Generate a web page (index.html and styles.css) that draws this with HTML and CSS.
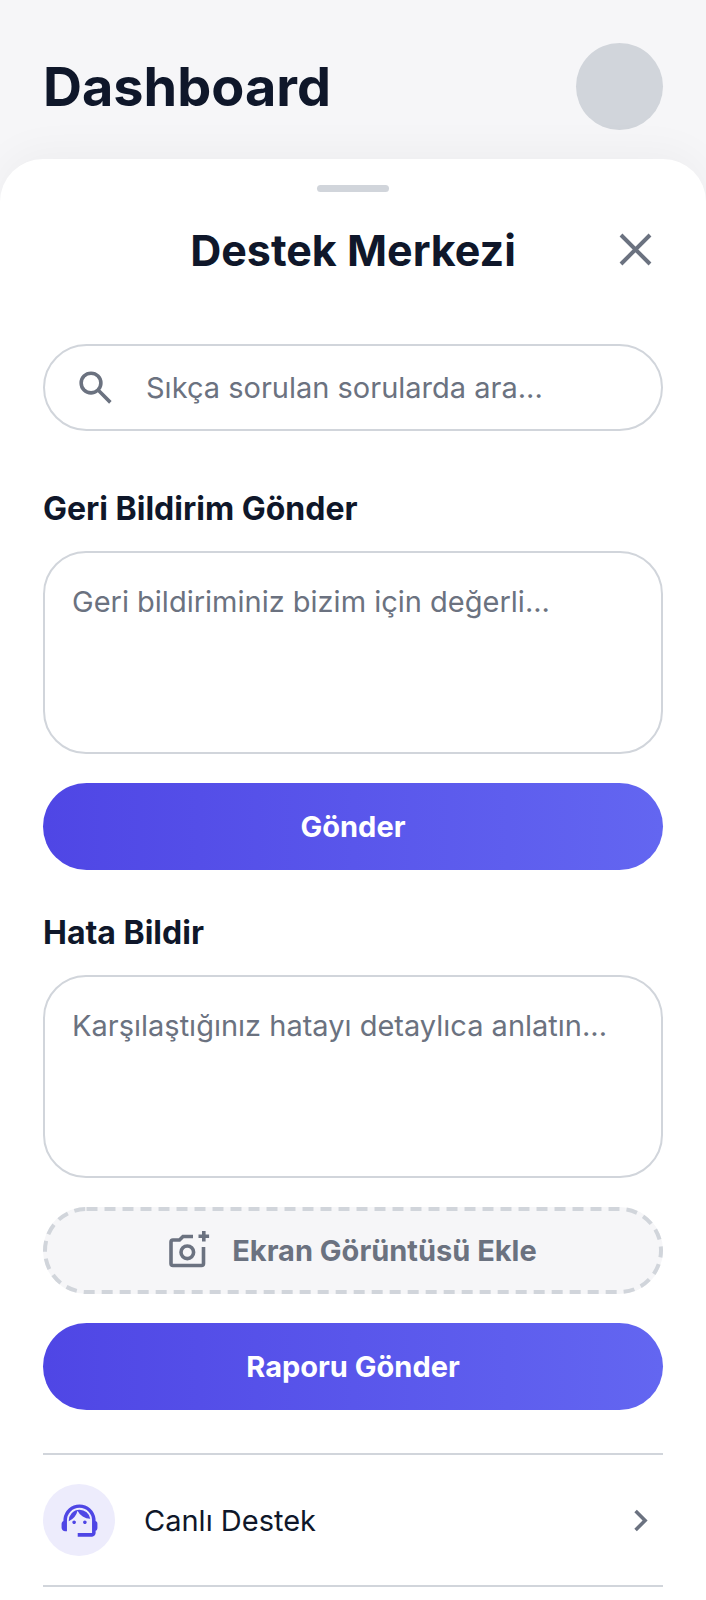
FILE: index.html
```html
<!DOCTYPE html>
<html lang="tr">
<head>
<meta charset="utf-8">
<meta name="viewport" content="width=device-width, initial-scale=1">
<title>Destek Merkezi</title>
<link rel="stylesheet" href="styles.css">
</head>
<body>
<header class="topbar">
  <h1 class="topbar-title">Dashboard</h1>
  <div class="avatar"></div>
</header>
<main class="sheet">
  <div class="handle"></div>
  <div class="sheet-header">
    <h2 class="sheet-title">Destek Merkezi</h2>
    <button class="close" type="button" aria-label="Kapat">
      <svg class="close-icon" viewBox="0 0 54 54" aria-hidden="true"><path d="M12 12l29 29M41 12l-29 29" fill="none" stroke="currentColor" stroke-width="4"/></svg>
    </button>
  </div>
  <div class="content">
    <label class="search">
      <svg class="icon" viewBox="0 -960 960 960" aria-hidden="true"><path d="M784-120 532-372q-30 24-69 38t-83 14q-109 0-184.500-75.500T120-580q0-109 75.500-184.500T380-840q109 0 184.500 75.500T640-580q0 44-14 83t-38 69l252 252-56 56ZM380-400q75 0 127.500-52.500T560-580q0-75-52.500-127.500T380-760q-75 0-127.500 52.500T200-580q0 75 52.500 127.500T380-400Z"/></svg>
      <input class="search-input" type="search" aria-label="Sorularda ara" placeholder="Sıkça sorulan sorularda ara...">
    </label>
    <form class="group">
      <label class="group-title" for="feedback">Geri Bildirim Gönder</label>
      <textarea class="field" id="feedback" placeholder="Geri bildiriminiz bizim için değerli..."></textarea>
      <button class="button primary" type="button">Gönder</button>
    </form>
    <form class="group">
      <label class="group-title" for="report">Hata Bildir</label>
      <textarea class="field" id="report" placeholder="Karşılaştığınız hatayı detaylıca anlatın..."></textarea>
      <button class="button upload" type="button">
        <svg class="dashes" aria-hidden="true"><rect class="dashes-line" x="2" y="2" rx="41.500"/></svg>
        <svg class="camera" viewBox="0 0 41 43" aria-hidden="true"><g fill="none" stroke="currentColor" stroke-width="3.600"><path d="M24 7.500H14l-3.500 3.500H4q-2 0-2 2v21.500q0 2 2 2h28.500q2 0 2-2V18"/><circle cx="18.300" cy="23.300" r="6.300"/><path d="M34.800 2v10.600M29.500 7.300h10.600"/></g></svg>
        <span>Ekran Görüntüsü Ekle</span>
      </button>
      <button class="button primary" type="button">Raporu Gönder</button>
    </form>
    <nav class="links">
      <a class="link" href="#support">
        <span class="badge"><svg class="icon" viewBox="0 -960 960 960" aria-hidden="true"><path d="M440-120v-80h320v-284q0-117-81.500-198.500T480-764q-117 0-198.500 81.500T200-484v244h-40q-33 0-56.500-23.500T80-320v-80q0-21 10.500-39.500T120-469l3-53q8-68 39.500-126t79-101q47.500-43 109-67T480-840q68 0 129 24t109 66.500Q766-707 797-649t40 126l3 52q19 9 29.500 27t10.500 38v92q0 20-10.500 38T840-249v49q0 33-23.500 56.500T760-120H440Zm-80-280q-17 0-28.500-11.500T320-440q0-17 11.500-28.500T360-480q17 0 28.500 11.500T400-440q0 17-11.500 28.500T360-400Zm240 0q-17 0-28.500-11.500T560-440q0-17 11.500-28.500T600-480q17 0 28.500 11.500T640-440q0 17-11.500 28.500T600-400Zm-359-62q-7-106 64-182t177-76q89 0 156.500 56.500T720-519q-91-1-167.500-49T435-698q-16 80-67.500 142.500T241-462Z"/></svg></span>
        <span class="link-text">Canlı Destek</span>
        <svg class="icon" viewBox="0 -960 960 960" aria-hidden="true"><path d="M504-480 320-664l56-56 240 240-240 240-56-56 184-184Z"/></svg>
      </a>
    </nav>
  </div>
</main>
</body>
</html>
```
FILE: styles.css
```css
* {
  box-sizing: border-box;
}

body {
  margin: 0;
  min-height: 100vh;
  display: flex;
  flex-direction: column;
  background: #f6f6f8;
  color: #0f172a;
  font-family: Inter, "Liberation Sans", sans-serif;
  font-size: 29px;
  line-height: 43px;
}

h1,
h2 {
  margin: 0;
}

button,
input,
textarea {
  font: inherit;
}

svg {
  display: block;
  flex: none;
}

.topbar {
  display: flex;
  align-items: center;
  justify-content: space-between;
  padding: 43px 43px 29px;
}

.topbar-title {
  font-size: 54px;
  line-height: 65px;
  font-weight: 700;
}

.avatar {
  width: 87px;
  height: 87px;
  border-radius: 50%;
  background: #d1d5db;
}

.sheet {
  flex: 1;
  padding-top: 26px;
  border-radius: 43px 43px 0 0;
  background: #fff;
  box-shadow: 0 -7px 43px rgba(0, 0, 0, 0.04);
}

.handle {
  width: 72px;
  height: 7px;
  margin: 0 auto;
  border-radius: 4px;
  background: #d1d5db;
}

.sheet-header {
  display: grid;
  grid-template-columns: 54px 1fr 54px;
  align-items: center;
  padding: 31px 43px 0;
}

.sheet-title {
  grid-column: 2;
  font-size: 43px;
  line-height: 54px;
  font-weight: 700;
  text-align: center;
}

.close {
  padding: 0;
  border: 0;
  background: none;
  color: #6b7280;
}

.close-icon {
  width: 54px;
  height: 54px;
}

.content {
  padding: 67px 43px 29px;
}

.search {
  display: flex;
  align-items: center;
  gap: 29px;
  height: 87px;
  padding: 0 29px;
  border: 2px solid #d1d5db;
  border-radius: 44px;
  color: #6b7280;
}

.search-input {
  flex: 1;
  min-width: 0;
  padding: 0;
  border: 0;
  outline: 0;
  background: none;
  color: #0f172a;
}

.icon {
  width: 43px;
  height: 43px;
  fill: currentColor;
}

.group {
  display: flex;
  flex-direction: column;
  gap: 29px;
  padding-top: 43px;
}

.search + .group {
  padding-top: 58px;
}

.group-title {
  font-size: 32px;
  line-height: 40px;
  font-weight: 700;
  margin-bottom: -7px;
}

.field {
  display: block;
  width: 100%;
  height: 203px;
  padding: 27px;
  border: 2px solid #d1d5db;
  border-radius: 43px;
  background: #fff;
  color: #0f172a;
  resize: none;
}

::placeholder {
  color: #6b7280;
  opacity: 1;
}

.button {
  display: flex;
  align-items: center;
  justify-content: center;
  gap: 22px;
  height: 87px;
  border: 0;
  border-radius: 44px;
  font-weight: 700;
}

.primary {
  background: linear-gradient(to right, #4f46e5, #6366f1);
  color: #fff;
}

.upload {
  position: relative;
  background: #f6f6f8;
  color: #6b7280;
}

.dashes {
  position: absolute;
  inset: 0;
  width: 100%;
  height: 100%;
}

.dashes-line {
  width: calc(100% - 4px);
  height: calc(100% - 4px);
  fill: none;
  stroke: #d1d5db;
  stroke-width: 4px;
  stroke-dasharray: 11 7;
}

.camera {
  width: 41px;
  height: 43px;
}

.links {
  margin-top: 43px;
  border-top: 2px solid #d1d5db;
}

.link {
  display: flex;
  align-items: center;
  gap: 29px;
  padding: 29px 0;
  border-bottom: 2px solid #d1d5db;
  color: #6b7280;
  text-decoration: none;
}

.badge {
  display: flex;
  align-items: center;
  justify-content: center;
  width: 72px;
  height: 72px;
  border-radius: 50%;
  background: #edecfc;
  color: #4f46e5;
}

.link-text {
  flex: 1;
  color: #0f172a;
}
```
